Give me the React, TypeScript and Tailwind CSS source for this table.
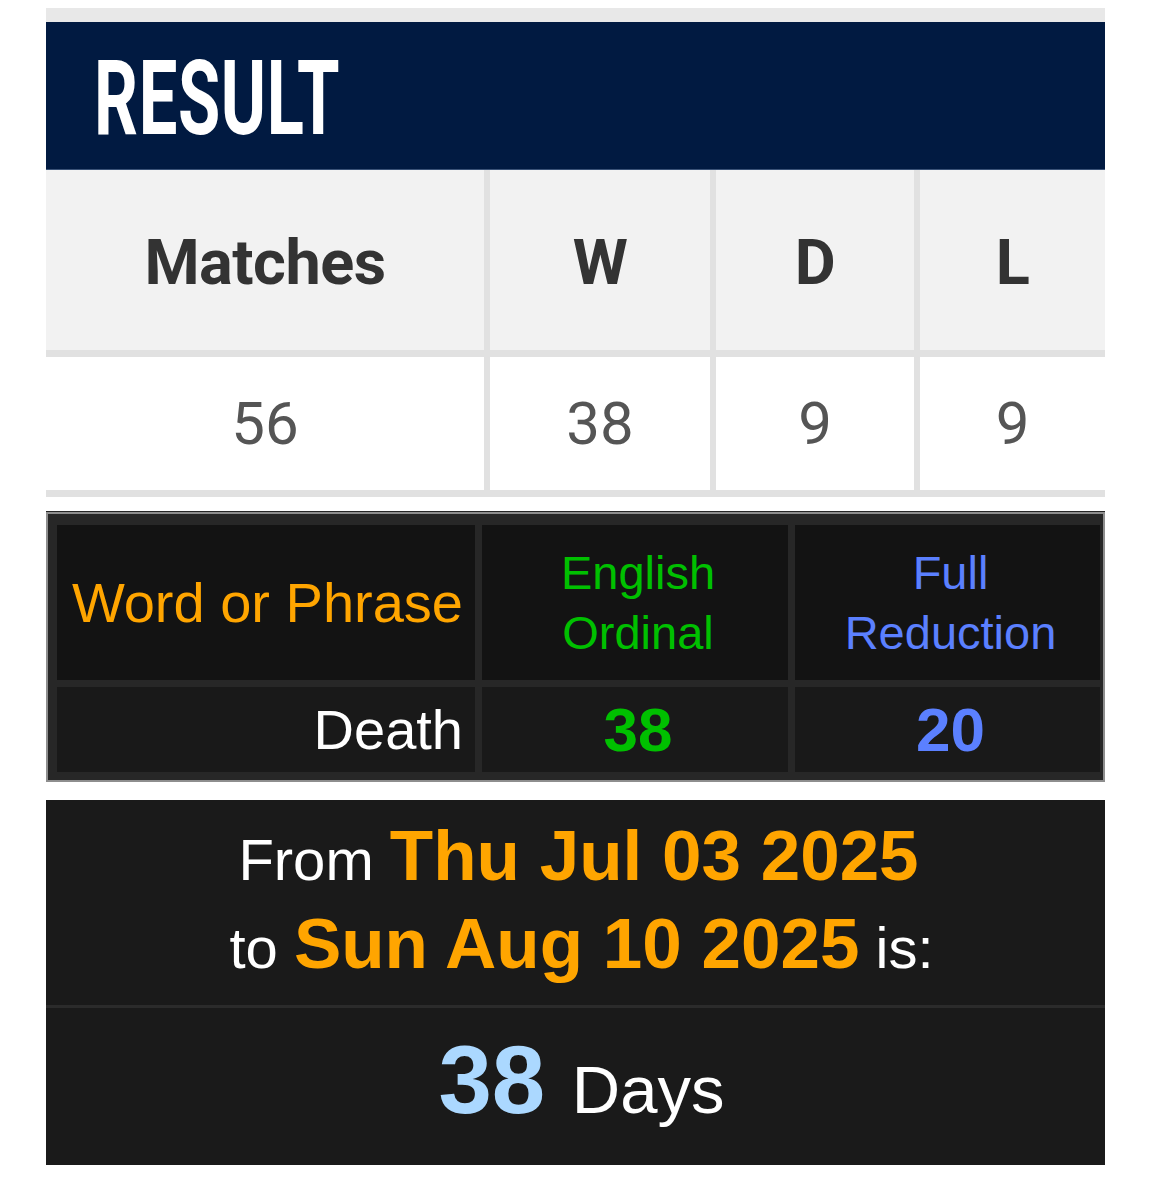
const roboto = { fontFamily: 'Roboto, "Open Sans", sans-serif' }

function ResultTable() {
  const heads = ['Matches', 'W', 'D', 'L']
  const vals = ['56', '38', '9', '9']
  return (
    <div>
      <div className="h-[14px] bg-[#e8e8e8]" />
      <div className="h-[148px] bg-[#011a41] flex items-center pl-[48px] border-b border-[#3a5277]">
        <span
          className="inline-block origin-left scale-x-[0.66] text-white font-bold text-[104px] leading-none tracking-[1px] mt-[6px]"
          style={roboto}
        >
          RESULT
        </span>
      </div>
      <div
        className="grid grid-cols-[438px_220px_198px_1fr] gap-x-[6px] gap-y-[7px] bg-[#e1e1e1] pb-[7px]"
        style={roboto}
      >
        {heads.map((h) => (
          <div key={h} className="h-[180px] bg-[#f2f2f2] flex items-center justify-center pt-[6px] text-[63px] font-bold text-[#333] tracking-[-0.5px]">
            {h}
          </div>
        ))}
        {vals.map((v, i) => (
          <div key={i} className="h-[133px] bg-white flex items-center justify-center text-[60px] text-[#555]">
            {v}
          </div>
        ))}
      </div>
    </div>
  )
}

function GematriaTable() {
  return (
    <div className="mt-[14px] border-t border-[#262626]" style={{ fontFamily: '"Liberation Sans", Arial, sans-serif' }}>
      <div className="border-2 border-[#8e8e8e] bg-[#272727] pt-[11px] pb-[8px] pl-[9px] pr-[3px] grid grid-cols-[418px_306px_1fr] gap-[7px]">
        {/* header row */}
        <div className="h-[155px] bg-[#131313] flex items-center justify-end pr-[12px] text-[56px] text-[#ffa500]">
          Word or Phrase
        </div>
        <div className="h-[155px] bg-[#131313] flex items-center justify-center pl-[6px] text-center text-[47px] leading-[60px] text-[#00c000]">
          English<br />Ordinal
        </div>
        <div className="h-[155px] bg-[#131313] flex items-center justify-center pl-[6px] text-center text-[47px] leading-[60px] text-[#5b80ff]">
          Full<br />Reduction
        </div>
        {/* value row */}
        <div className="h-[85px] bg-[#191919] flex items-center justify-end pr-[12px] text-[56px] text-white">
          Death
        </div>
        <div className="h-[85px] bg-[#191919] flex items-center justify-center pl-[6px] text-[62px] font-bold text-[#00c000]">
          38
        </div>
        <div className="h-[85px] bg-[#191919] flex items-center justify-center pl-[6px] text-[62px] font-bold text-[#5b80ff]">
          20
        </div>
      </div>
    </div>
  )
}

function DateSpan() {
  return (
    <div className="mt-[18px] bg-[#1a1a1a]" style={{ fontFamily: '"Liberation Sans", Arial, sans-serif' }}>
      <div className="h-[205px] pt-[12px] text-center text-white">
        <div className="h-[88px] leading-[88px] pl-[6px]">
          <span className="text-[58px] leading-[88px]">From </span>
          <span className="text-[71px] leading-[88px] font-bold text-[#ffa500]">Thu Jul 03 2025</span>
        </div>
        <div className="h-[88px] leading-[88px] pl-[12px]">
          <span className="text-[58px] leading-[88px]">to </span>
          <span className="text-[71px] leading-[88px] font-bold text-[#ffa500]">Sun Aug 10 2025</span>
          <span className="text-[58px] leading-[88px]"> is:</span>
        </div>
      </div>
      <div className="h-[3px] bg-[#2b2b2b]" />
      <div className="h-[157px] pt-[24px] pl-[12px] text-center leading-none">
        <span className="text-[96px] font-bold text-[#abd8ff]">38</span>
        <span className="text-[67px] text-white ml-[8px]"> Days</span>
      </div>
    </div>
  )
}

export default function App() {
  return (
    <div className="bg-white min-h-[1200px] pt-[8px] pl-[46px]">
      <div className="w-[1059px]">
        <ResultTable />
        <GematriaTable />
        <DateSpan />
      </div>
    </div>
  )
}
